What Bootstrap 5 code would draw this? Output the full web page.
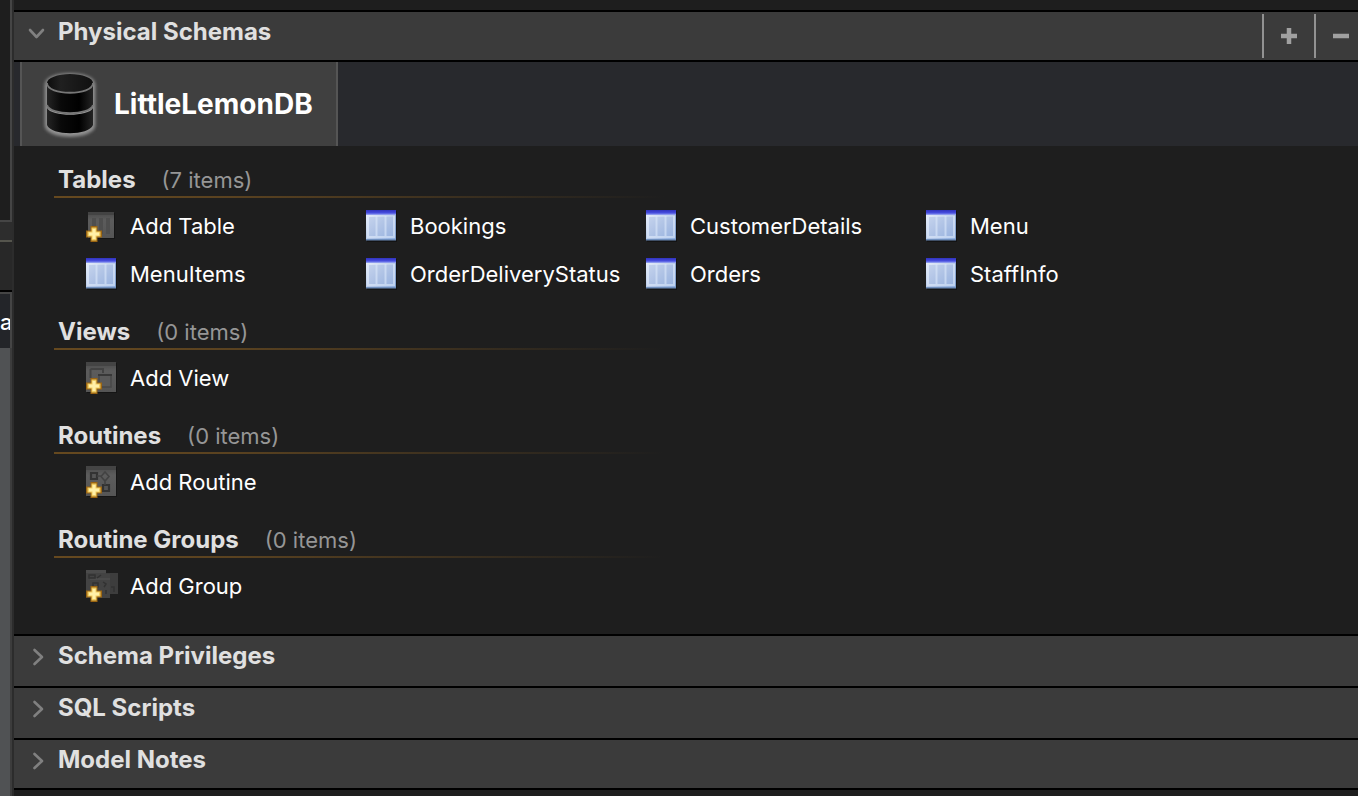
<!DOCTYPE html>
<html lang="en" data-bs-theme="dark">
<head>
<meta charset="utf-8">
<meta name="viewport" content="width=device-width, initial-scale=1">
<title>LittleLemonDB - Physical Schemas</title>
<link rel="stylesheet" href="https://cdn.jsdelivr.net/npm/bootstrap@5.3.0/dist/css/bootstrap.min.css">
<style>
body { background: #1e1e1e; color: #fff; font-family: Inter, "Liberation Sans", sans-serif; font-size: 22px; line-height: 28px; }
button { font: inherit; color: inherit; background: none; border: 0; padding: 0; text-align: left; }
svg { display: block; flex: none; }

.side-strip { width: 14px; background: #2c2c2c; }
.side-strip > div { width: 12px; }
.side-top { height: 222px; background: #1e1e1e; border-right: 2px solid #454545; border-bottom: 2px solid #454545; }
.side-gap { height: 18px; background: #2d2d2d; }
.side-tab { height: 52px; background: #282828; border-top: 2px solid #55554d; border-bottom: 2px solid #000; }
.side-head { height: 56px; background: #232529; border-top: 2px solid #454545; border-right: 2px solid #454545; padding-top: 14px; font-weight: 500; }
.side-list { background: #505254; border-right: 2px solid #3c3c3c; }

.top-edge { height: 10px; }
.bar { background: #3b3b3b; border-top: 2px solid #000; height: 52px; }
.bar-toggle { padding: 6px 0 0 14px; height: 100%; color: #e0e0e0; font-size: 24px; font-weight: 700; }
.bar-toggle svg { margin-top: 6px; }
.bar-label { margin-left: 12px; }
.bar-open { border-bottom: 2px solid #000; }
.bar-tools { margin: 2px -8px 2px 0; }
.bar-tools button { width: 52px; border-left: 2px solid #929292; }
.bar-last { border-bottom: 2px solid #000; }

.schema-tabs { background: #28292d; padding-left: 6px; }
.schema-tab { height: 84px; width: 318px; background: #404040; border: solid #555; border-width: 0 2px; padding-left: 20px; gap: 14px; font-size: 28px; font-weight: 700; }

.schema-body { padding: 2px 0 22px 40px; }
.group-head { height: 50px; padding: 18px 0 0 4px; border-bottom: 2px solid; border-image: linear-gradient(90deg, #66491f, #5a4220 180px, #1e1e1e 610px) 1; gap: 26px; }
.group-head h2 { font-size: 24px; line-height: 28px; font-weight: 700; color: #e0e0e0; margin: 0; }
.group-head span { color: #969696; }
.group-items { display: grid; grid-template-columns: repeat(auto-fill, 280px); padding: 4px 0 2px 32px; }
.group-items button { height: 48px; gap: 12px; white-space: nowrap; }
</style>
</head>
<body>
<svg width="0" height="0" class="position-absolute" aria-hidden="true">
  <defs>
    <linearGradient id="tb" x1="0" y1="0" x2="1" y2="1"><stop offset="0" stop-color="#e8effa"/><stop offset=".5" stop-color="#bccdea"/><stop offset="1" stop-color="#8fafe0"/></linearGradient>
    <linearGradient id="th" x1="0" y1="0" x2="0" y2="1"><stop offset="0" stop-color="#3032bd"/><stop offset=".6" stop-color="#484ee0"/><stop offset="1" stop-color="#a4b4f4"/></linearGradient>
    <linearGradient id="gp" x1="0" y1="0" x2="0" y2="1"><stop offset="0" stop-color="#484848"/><stop offset=".3" stop-color="#5c5c5c"/><stop offset="1" stop-color="#555"/></linearGradient>
    <linearGradient id="cy" x1="0" y1="0" x2="1" y2="0"><stop offset="0" stop-color="#242424"/><stop offset=".3" stop-color="#090909"/><stop offset=".7" stop-color="#000"/><stop offset="1" stop-color="#242424"/></linearGradient>
    <linearGradient id="ct" x1="0" y1="0" x2="1" y2="0"><stop offset="0" stop-color="#0c0c0c"/><stop offset=".3" stop-color="#202020"/><stop offset="1" stop-color="#101010"/></linearGradient>
    <filter id="glow" x="-20%" y="-20%" width="140%" height="140%"><feGaussianBlur stdDeviation="1.6"/></filter>
    <symbol id="i-table" viewBox="0 0 32 32">
      <path d="M1 1h30v31H1z" fill="#131313"/>
      <path d="M0 0h30v30.500H0z" fill="#6f8fbd"/>
      <path d="M0 4h29.500v25H0z" fill="url(#tb)"/>
      <path d="M0 0h30v5H0z" fill="url(#th)"/>
      <path d="M3 7h24v19H3z" fill="#9db5df" fill-opacity=".4"/>
      <path d="M2 6v21h26V6M10.500 6v20M19.500 6v20" fill="none" stroke="#dce8fa" stroke-width="2" stroke-opacity=".6"/>
    </symbol>
    <symbol id="i-plus" viewBox="0 0 16 16">
      <path d="M4.500 0h7v4.500H16v7h-4.500V16h-7v-4.500H0v-7h4.500z" fill="#9a6412"/>
      <path d="M5.500 1.500h5v4h4v5h-4v4h-5v-4h-4v-5h4z" fill="#f0cd63"/>
      <path d="M6.500 3h3v3.500H13v3H9.500V13h-3V9.500H3v-3h3.500z" fill="#fff0a8"/>
    </symbol>
    <symbol id="i-addtable" viewBox="0 0 32 32">
      <path d="M3 3h26v26H3z" fill="#151515"/>
      <path d="M2 2h26v26H2z" fill="url(#gp)"/><path d="M2 2h26v3H2z" fill="#434343"/>
      <path d="M6 8h4v16H6zM13 8h4v16h-4zM20 8h4v16h-4z" fill="#4e4e4e"/>
      <use href="#i-plus" y="16" width="16" height="16"/>
    </symbol>
    <symbol id="i-addview" viewBox="0 0 32 32">
      <path d="M1 1h30v30H1z" fill="#151515"/><path d="M0 0h30v30H0z" fill="url(#gp)"/><path d="M0 0h30v4H0z" fill="#444"/>
      <path d="M4.500 7H17v4M4.500 7v9" fill="none" stroke="#434343" stroke-width="2"/>
      <path d="M13 13h12v12H13z" fill="#5a5a5a" stroke="#484848" stroke-width="1.500"/><path d="M12 12h14v2H12z" fill="#383838"/>
      <use href="#i-plus" y="16" width="16" height="16"/>
    </symbol>
    <symbol id="i-addroutine" viewBox="0 0 32 32">
      <path d="M1 1h30v30H1z" fill="#151515"/><path d="M0 0h30v30H0z" fill="url(#gp)"/><path d="M0 0h30v4H0z" fill="#444"/>
      <path d="M5 7h6v6H5zM17 19h6v6h-6z" fill="#555" stroke="#333" stroke-width="2.200"/>
      <path d="M11 10h5M19 15v4M19 6l4 4.500-4 4.500-4-4.500z" fill="none" stroke="#424242" stroke-width="1.600"/>
      <use href="#i-plus" y="16" width="16" height="16"/>
    </symbol>
    <symbol id="i-addgroup" viewBox="0 0 32 32">
      <path d="M8 3h24v21H8z" fill="#3d3d3d"/>
      <path d="M0 0h20v4h4v24H0z" fill="#434343"/><path d="M0 0h20v3H0zM4 8h20v2H4z" fill="#4b4b4b"/>
      <path d="M3 5h6v3H3zM11 8l4-3M7 13h5v4H7zM17 12l3 2-2 3M20 20v4M25 17h3v5" fill="none" stroke="#323232" stroke-width="1.500"/>
      <use href="#i-plus" y="16" width="16" height="16"/>
    </symbol>
    <symbol id="i-right" viewBox="0 0 18 18"><path d="M6.500 2l7.500 7-7.500 7" fill="none" stroke="#808080" stroke-width="2.600" stroke-linecap="round" stroke-linejoin="round"/></symbol>
    <symbol id="i-down" viewBox="0 0 18 18"><path d="M2 6l6.500 7L15 6" fill="none" stroke="#808080" stroke-width="2.600" stroke-linecap="round" stroke-linejoin="round"/></symbol>
  </defs>
</svg>

<div class="d-flex min-vh-100">
  <aside class="side-strip d-flex flex-column flex-shrink-0 overflow-hidden">
    <div class="side-top"></div>
    <div class="side-gap"></div>
    <div class="side-tab"></div>
    <div class="side-head overflow-hidden">a</div>
    <div class="side-list flex-grow-1"></div>
  </aside>

  <main class="flex-grow-1 overflow-hidden">
    <div class="top-edge"></div>
    <div class="bar bar-open d-flex overflow-hidden">
      <button type="button" class="bar-toggle d-flex flex-grow-1" aria-expanded="true"><svg width="18" height="18"><use href="#i-down"/></svg><span class="bar-label">Physical Schemas</span></button>
      <div class="bar-tools d-flex">
        <button type="button" class="d-flex align-items-center justify-content-center" aria-label="Add schema"><svg width="18" height="18" viewBox="0 0 18 18"><path d="M9 1v16M1 9h16" stroke="#a0a0a0" stroke-width="4.500"/></svg></button>
        <button type="button" class="d-flex align-items-center justify-content-center" aria-label="Remove schema"><svg width="18" height="18" viewBox="0 0 18 18"><path d="M1 9h16" stroke="#a0a0a0" stroke-width="4.500"/></svg></button>
      </div>
    </div>

    <div class="schema-tabs">
      <button type="button" class="schema-tab d-flex align-items-center">
        <svg width="58" height="72" viewBox="0 0 58 72">
          <path d="M4 17c0-14 48-14 48 0v40c0 14-48 14-48 0z" fill="#999" stroke="#888" stroke-width="3" filter="url(#glow)"/>
          <path d="M5 16v22c4 10 42 10 46 0V16z" fill="url(#cy)"/>
          <path d="M5 40v17c4 11 42 11 46 0V40c-4 9-42 9-46 0z" fill="url(#cy)"/>
          <ellipse cx="28" cy="15" rx="23" ry="9" fill="url(#ct)"/>
          <path d="M5 15c0 13 46 13 46 0M5 37c3 11 43 11 46 0" fill="none" stroke="#777" stroke-width="1.800"/>
        </svg>
        <span>LittleLemonDB</span>
      </button>
    </div>

    <div class="schema-body">
      <section>
        <div class="group-head d-flex"><h2>Tables</h2><span>(7 items)</span></div>
        <div class="group-items">
          <button type="button" class="d-flex align-items-center"><svg width="32" height="32"><use href="#i-addtable"/></svg>Add Table</button>
          <button type="button" class="d-flex align-items-center"><svg width="32" height="32"><use href="#i-table"/></svg>Bookings</button>
          <button type="button" class="d-flex align-items-center"><svg width="32" height="32"><use href="#i-table"/></svg>CustomerDetails</button>
          <button type="button" class="d-flex align-items-center"><svg width="32" height="32"><use href="#i-table"/></svg>Menu</button>
          <button type="button" class="d-flex align-items-center"><svg width="32" height="32"><use href="#i-table"/></svg>MenuItems</button>
          <button type="button" class="d-flex align-items-center"><svg width="32" height="32"><use href="#i-table"/></svg>OrderDeliveryStatus</button>
          <button type="button" class="d-flex align-items-center"><svg width="32" height="32"><use href="#i-table"/></svg>Orders</button>
          <button type="button" class="d-flex align-items-center"><svg width="32" height="32"><use href="#i-table"/></svg>StaffInfo</button>
        </div>
      </section>
      <section>
        <div class="group-head d-flex"><h2>Views</h2><span>(0 items)</span></div>
        <div class="group-items">
          <button type="button" class="d-flex align-items-center"><svg width="32" height="32"><use href="#i-addview"/></svg>Add View</button>
        </div>
      </section>
      <section>
        <div class="group-head d-flex"><h2>Routines</h2><span>(0 items)</span></div>
        <div class="group-items">
          <button type="button" class="d-flex align-items-center"><svg width="32" height="32"><use href="#i-addroutine"/></svg>Add Routine</button>
        </div>
      </section>
      <section>
        <div class="group-head d-flex"><h2>Routine Groups</h2><span>(0 items)</span></div>
        <div class="group-items">
          <button type="button" class="d-flex align-items-center"><svg width="32" height="32"><use href="#i-addgroup"/></svg>Add Group</button>
        </div>
      </section>
    </div>

    <div class="bar"><button type="button" class="bar-toggle d-flex w-100" aria-expanded="false"><svg width="18" height="18"><use href="#i-right"/></svg><span class="bar-label">Schema Privileges</span></button></div>
    <div class="bar"><button type="button" class="bar-toggle d-flex w-100" aria-expanded="false"><svg width="18" height="18"><use href="#i-right"/></svg><span class="bar-label">SQL Scripts</span></button></div>
    <div class="bar bar-last"><button type="button" class="bar-toggle d-flex w-100" aria-expanded="false"><svg width="18" height="18"><use href="#i-right"/></svg><span class="bar-label">Model Notes</span></button></div>
  </main>
</div>
<script src="https://cdn.jsdelivr.net/npm/bootstrap@5.3.0/dist/js/bootstrap.bundle.min.js"></script>
</body>
</html>
